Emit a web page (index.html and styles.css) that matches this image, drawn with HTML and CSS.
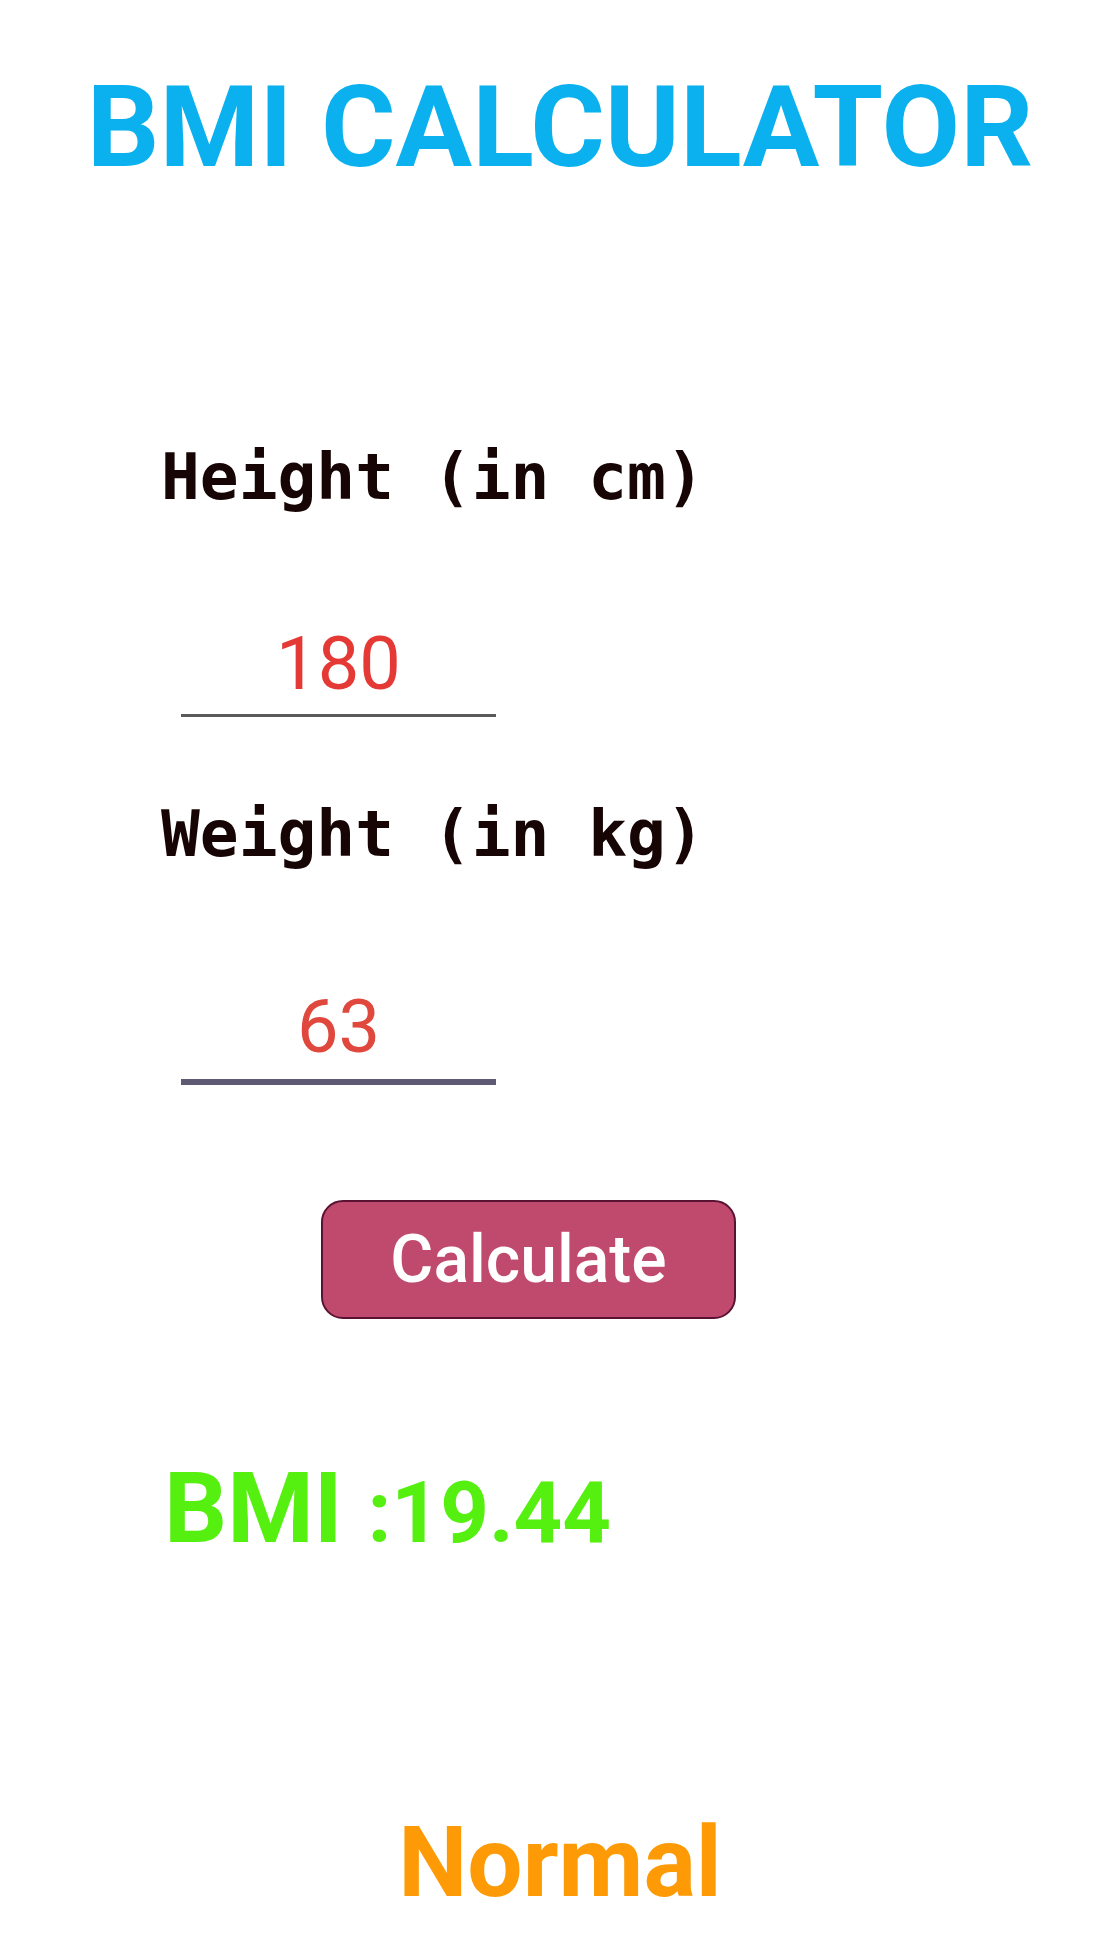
FILE: index.html
```html
<!DOCTYPE html>
<html lang="en">
<head>
<meta charset="utf-8">
<title>BMI Calculator</title>
<link rel="stylesheet" href="styles.css">
</head>
<body>
<main class="app">
  <h1 class="title">BMI CALCULATOR</h1>
  <section class="form">
    <div class="label label-height">Height (in cm)</div>
    <div class="field field-height"><span class="value">180</span></div>
    <div class="label label-weight">Weight (in kg)</div>
    <div class="field field-weight field-focused"><span class="value value-weight">63</span></div>
  </section>
  <div class="actions">
    <button class="calc-btn" type="button">Calculate</button>
  </div>
  <div class="result">
    <span class="result-key">BMI&nbsp;</span><span class="result-value">:19.44</span>
  </div>
  <div class="status">Normal</div>
</main>
</body>
</html>
```

FILE: styles.css
```css
html, body {
  margin: 0;
  padding: 0;
  background: #ffffff;
}

body {
  font-family: Roboto, "Noto Sans", "Liberation Sans", sans-serif;
}

.app {
  width: 1120px;
  display: flex;
  flex-direction: column;
}

.title {
  margin: 70px 0 0 0;
  font-size: 114px;
  font-weight: 700;
  line-height: 1;
  text-align: center;
  color: #0bb1ef;
}

.form {
  display: flex;
  flex-direction: column;
  padding-left: 161px;
}

.label {
  font-family: "DejaVu Sans Mono", "Liberation Mono", monospace;
  font-size: 64.5px;
  font-weight: 700;
  line-height: 1;
  color: #170404;
}

.label-height {
  margin-top: 261px;
}

.label-weight {
  margin-top: 85px;
}

.field {
  width: 315px;
  margin-left: 20px;
  text-align: center;
  font-size: 74px;
  line-height: 1;
  color: #e53935;
  padding-bottom: 13px;
  border-bottom: 3px solid #5a5a5a;
}

.field-height {
  margin-top: 117px;
}

.field-weight {
  margin-top: 124px;
  padding-bottom: 15px;
  border-bottom: 6px solid #5e5a74;
  color: #e0483e;
}

.value {
  display: inline-block;
}

.actions {
  display: flex;
  padding-left: 321px;
  margin-top: 115px;
}

.calc-btn {
  box-sizing: border-box;
  width: 415px;
  height: 119px;
  border: 2px solid #5a1232;
  border-radius: 22px;
  background: #c0496e;
  color: #ffffff;
  font-family: Roboto, "Noto Sans", "Liberation Sans", sans-serif;
  font-size: 66px;
  font-weight: 500;
  line-height: 1;
  padding: 0;
  display: flex;
  align-items: center;
  justify-content: center;
}

.result {
  display: flex;
  align-items: baseline;
  padding-left: 164px;
  margin-top: 140px;
  color: #55ef10;
  font-weight: 700;
  line-height: 1;
}

.result-key {
  font-size: 99px;
}

.result-value {
  font-size: 85px;
}

.status {
  margin-top: 256px;
  text-align: center;
  font-size: 98px;
  font-weight: 700;
  line-height: 1;
  color: #fd9a05;
}
```
